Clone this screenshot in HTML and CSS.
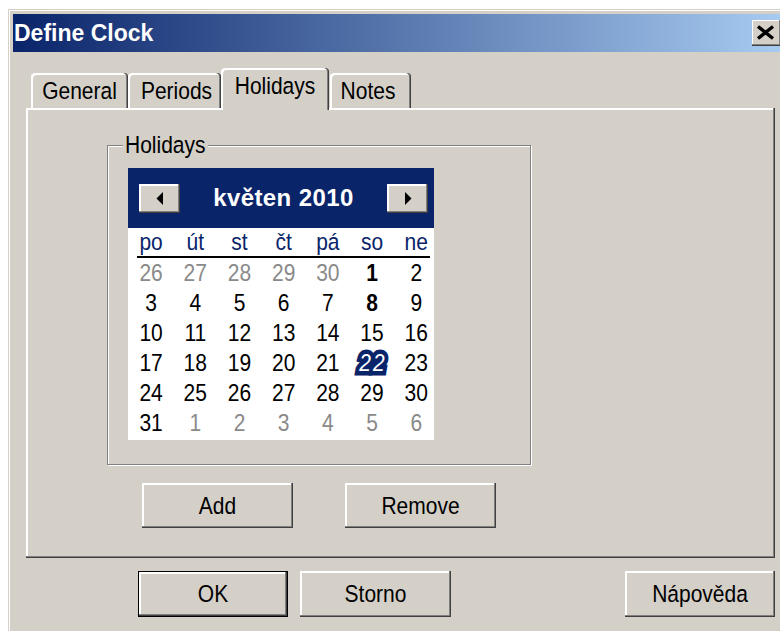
FILE: index.html
```html
<!DOCTYPE html>
<html lang="cs">
<head>
<meta charset="utf-8">
<title>Define Clock</title>
<link rel="stylesheet" href="styles.css">
</head>
<body>
<div class="window">
  <div class="titlebar">
    <span class="title">Define Clock</span>
    <button class="close" type="button" aria-label="Close">
      <svg width="19" height="15" viewBox="0 0 19 15"><path d="M2 1.5 L17 13.5 M17 1.5 L2 13.5" stroke="#000" stroke-width="3.4" fill="none"/></svg>
    </button>
  </div>

  <div class="tabs">
    <div class="tab tab-general"><span class="t">General</span></div>
    <div class="tab tab-periods"><span class="t">Periods</span></div>
    <div class="tab tab-holidays active"><span class="t">Holidays</span></div>
    <div class="tab tab-notes"><span class="t">Notes</span></div>
  </div>

  <div class="panel">
    <div class="group">
      <div class="group-label"><span class="t">Holidays</span></div>
      <div class="calendar">
        <div class="cal-head">
          <button class="nav" type="button" aria-label="Previous month">
            <svg width="8" height="13" viewBox="0 0 8 13"><polygon points="7,0 7,13 0.5,6.5" fill="#000"/></svg>
          </button>
          <div class="month">květen 2010</div>
          <button class="nav" type="button" aria-label="Next month">
            <svg width="8" height="13" viewBox="0 0 8 13"><polygon points="1,0 1,13 7.5,6.5" fill="#000"/></svg>
          </button>
        </div>
        <div class="weekdays">
          <span>po</span><span>út</span><span>st</span><span>čt</span><span>pá</span><span>so</span><span>ne</span>
        </div>
        <div class="rule"></div>
        <div class="days">
          <span class="other">26</span><span class="other">27</span><span class="other">28</span><span class="other">29</span><span class="other">30</span><span class="bold">1</span><span>2</span>
          <span>3</span><span>4</span><span>5</span><span>6</span><span>7</span><span class="bold">8</span><span>9</span>
          <span>10</span><span>11</span><span>12</span><span>13</span><span>14</span><span>15</span><span>16</span>
          <span>17</span><span>18</span><span>19</span><span>20</span><span>21</span><span class="today">22</span><span>23</span>
          <span>24</span><span>25</span><span>26</span><span>27</span><span>28</span><span>29</span><span>30</span>
          <span>31</span><span class="other">1</span><span class="other">2</span><span class="other">3</span><span class="other">4</span><span class="other">5</span><span class="other">6</span>
        </div>
      </div>
    </div>
    <div class="actions">
      <button class="btn" type="button"><span class="t">Add</span></button>
      <button class="btn" type="button"><span class="t">Remove</span></button>
    </div>
  </div>

  <div class="footer">
    <button class="btn btn-default" type="button"><span class="t">OK</span></button>
    <button class="btn btn-cancel" type="button"><span class="t">Storno</span></button>
    <button class="btn btn-help" type="button"><span class="t">Nápověda</span></button>
  </div>
</div>
</body>
</html>
```

FILE: styles.css
```css
* { box-sizing: border-box; }

html, body {
  margin: 0;
  height: 100%;
}

body {
  background: #fff;
  overflow: hidden;
  font-family: "Liberation Sans", Arial, sans-serif;
  font-size: 21px;
  color: #000;
}

button {
  font: inherit;
  color: inherit;
  margin: 0;
  padding: 0;
  border: 0;
  background: #d4d0c8;
}

/* text in the scaled dialog is slightly taller than wide */
.t {
  display: inline-block;
  transform: scaleY(1.14);
}

/* ---- window frame ---- */
.window {
  margin: 9px 0 0 8px;
  width: 784px;
  height: 640px;
  background: #d4d0c8;
  padding: 5px 5px 0 5px;
  box-shadow: inset 1px 1px #d4d0c8, inset 2px 2px #fff;
}

.titlebar {
  height: 38px;
  display: flex;
  align-items: center;
  padding-left: 1px;
  background: linear-gradient(to right, #0a246a, #a6caf0 99%);
}

.title {
  color: #fff;
  font-weight: bold;
  font-size: 23px;
}

.close {
  margin-left: auto;
  margin-right: 6px;
  width: 29px;
  height: 26px;
  display: flex;
  align-items: center;
  justify-content: flex-start;
  padding: 0 0 1px 4px;
  box-shadow: inset -1px -1px #404040, inset -2px -2px #808080, inset 1px 1px #fff;
}

/* ---- tab strip ---- */
.tabs {
  position: relative;
  z-index: 1;
  display: flex;
  align-items: flex-end;
  height: 40px;
  margin-top: 16px;
  padding-left: 18px;
}

.tab {
  height: 35px;
  display: flex;
  align-items: center;
  justify-content: center;
  background: #d4d0c8;
  border-radius: 4px 4px 0 0;
  box-shadow: inset -1px 0 #404040, inset -2px 0 #808080, inset 2px 2px #fff;
}

.tab-general { width: 97px; }
.tab-periods { width: 93px; padding-left: 4px; }
.tab-holidays { width: 108px; }
.tab-notes { width: 81px; margin-left: 1px; padding-right: 5px; }

.tab.active {
  height: 42px;
  margin-bottom: -2px;
  padding-bottom: 6px;
}

/* ---- page panel ---- */
.panel {
  margin-left: 13px;
  width: 749px;
  height: 450px;
  padding-top: 37px;
  box-shadow: inset -1px -1px #404040, inset -2px -2px #808080, inset 2px 2px #fff;
}

.group {
  margin-left: 81px;
  width: 424px;
  height: 320px;
  border: 1px solid #808080;
  box-shadow: 1px 1px #fff, inset 1px 1px #fff;
}

.group-label {
  display: table;
  margin: -13px 0 0 15px;
  padding: 0 2px;
  line-height: 24px;
  background: #d4d0c8;
}

/* ---- month calendar ---- */
.calendar {
  width: 306px;
  margin: 11px 0 0 20px;
  background: #fff;
}

.cal-head {
  height: 60px;
  display: flex;
  align-items: center;
  padding: 0 6px 0 11px;
  background: #0a246a;
}

.nav {
  width: 41px;
  height: 29px;
  display: flex;
  align-items: center;
  justify-content: center;
  box-shadow: inset -1px -1px #404040, inset -2px -2px #808080, inset 2px 2px #fff;
}

.month {
  flex: 1;
  text-align: center;
  color: #fff;
  font-weight: bold;
  font-size: 24px;
  letter-spacing: 0.4px;
}

.weekdays,
.days {
  display: grid;
  grid-template-columns: repeat(7, 44.2px);
  padding-left: 1px;
  text-align: center;
}

.weekdays {
  height: 28px;
  align-items: center;
  color: #0a246a;
}

.weekdays span,
.days span {
  transform: scaleY(1.14);
}

.rule {
  height: 2px;
  margin: 0 4px 0 9px;
  background: #000;
}

.days {
  grid-auto-rows: 30px;
  align-items: center;
  padding-bottom: 2px;
}

.days .other { color: #8a8a8a; }
.days .bold { font-weight: bold; }

/* today's date: a navy smudge with thin white figures */
.days .today {
  color: #fff;
  font-style: italic;
  letter-spacing: 2px;
  padding-left: 2px;
  -webkit-text-stroke: 8px #0a246a;
  paint-order: stroke fill;
}

/* ---- buttons ---- */
.btn {
  width: 151px;
  height: 45px;
  box-shadow: inset -1px -1px #404040, inset -2px -2px #808080, inset 2px 2px #fff;
}

.actions {
  display: flex;
  gap: 52px;
  margin: 18px 0 0 116px;
}

.footer {
  display: flex;
  margin-top: 13px;
  padding-left: 125px;
}

.footer .btn {
  height: 46px;
}

.btn-default {
  width: 150px;
  border: 1px solid #000;
}

.btn-cancel {
  margin-left: 12px;
}

.btn-help {
  width: 150px;
  margin-left: 174px;
}
```
